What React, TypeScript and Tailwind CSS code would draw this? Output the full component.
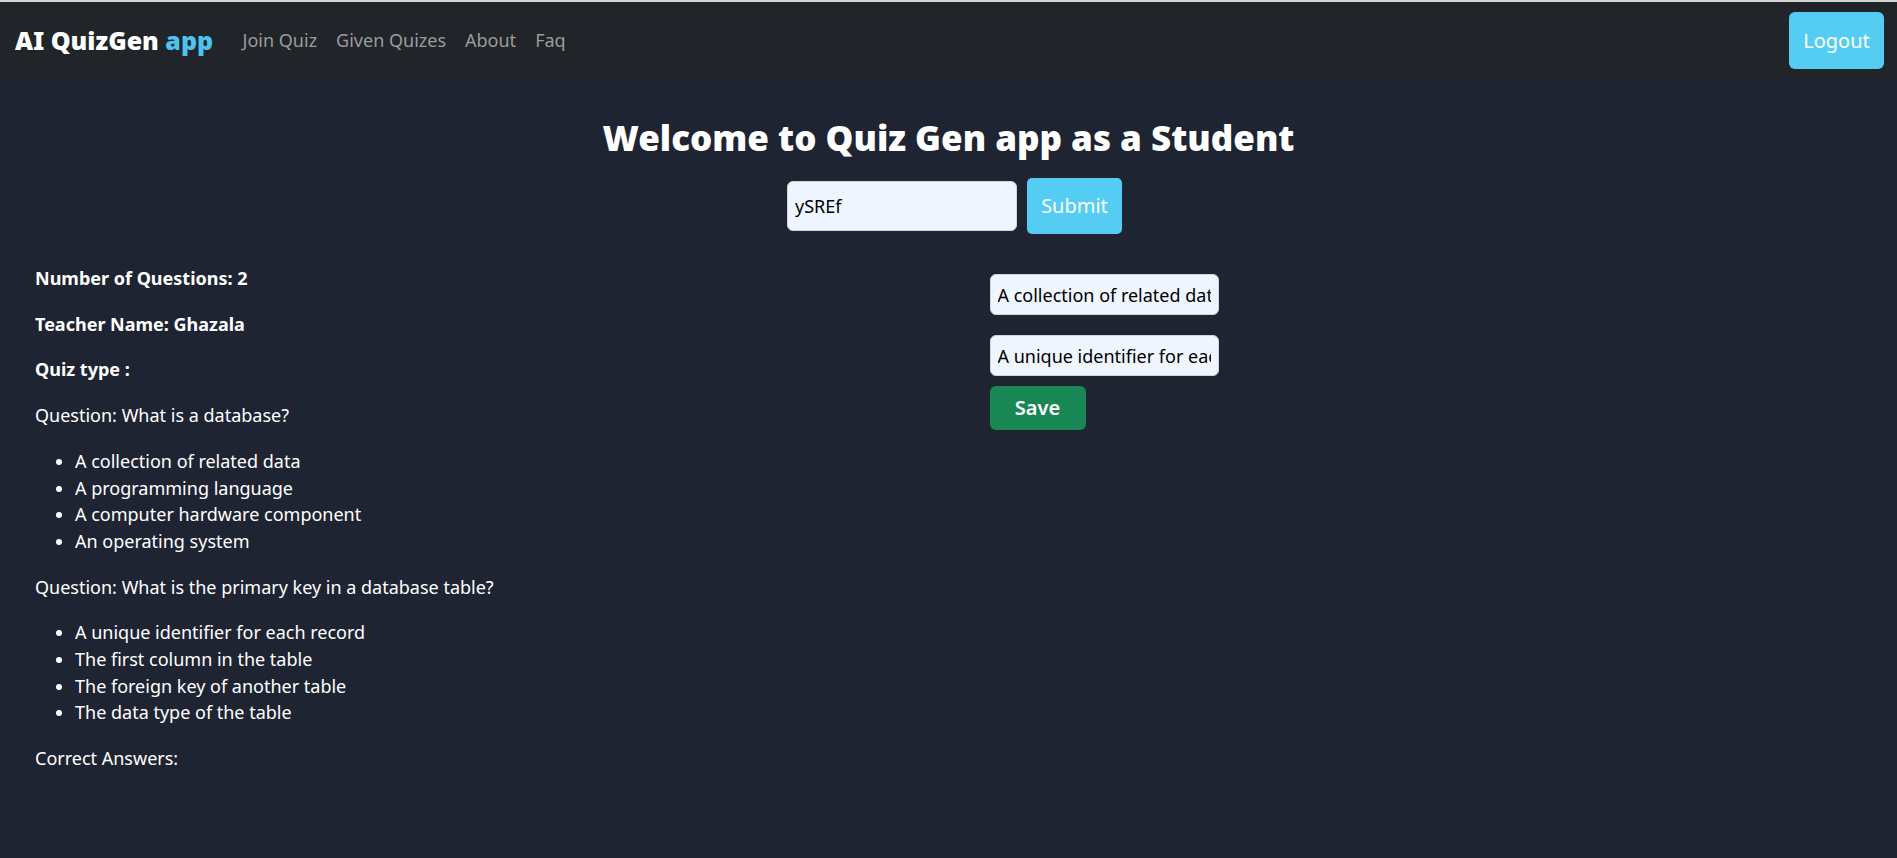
import React from 'react';

const navLinks = ['Join Quiz', 'Given Quizes', 'About', 'Faq'];

const questions = [
  {
    text: 'What is a database?',
    options: [
      'A collection of related data',
      'A programming language',
      'A computer hardware component',
      'An operating system',
    ],
  },
  {
    text: 'What is the primary key in a database table?',
    options: [
      'A unique identifier for each record',
      'The first column in the table',
      'The foreign key of another table',
      'The data type of the table',
    ],
  },
];

const Navbar = () => (
  <nav className="flex items-center justify-between h-[79px] border-t-2 border-[#d4d4d4] bg-[#212529] pl-[15px] pr-[13px]">
    <div className="flex items-center">
      <span className="text-[25px] font-black text-white leading-none">
        AI QuizGen <span className="text-[#4fc3f0]">app</span>
      </span>
      <ul className="flex items-center ml-[20px]">
        {navLinks.map((link) => (
          <li key={link} className="px-[9.5px] text-[18px] text-[#9a9b9e] leading-[27px]">
            {link}
          </li>
        ))}
      </ul>
    </div>
    <button className="w-[95px] h-[57px] rounded-[6px] bg-[#55ccf2] text-white text-[20px]">
      Logout
    </button>
  </nav>
);

const App = () => {
  return (
    <div className="min-h-screen bg-[#1f2433] font-['Noto_Sans',sans-serif]">
      <Navbar />

      <main>
        {/* titre + code du quiz */}
        <h1 className="mt-[37px] text-center text-[35px] leading-[44px] font-black text-white">
          Welcome to Quiz Gen app as a Student
        </h1>
        <div className="flex items-center justify-center gap-[10px] mt-[18px] pl-[12px]">
          <input
            defaultValue="ySREf"
            className="w-[230px] h-[50px] rounded-[6px] border border-[#d1d5db] bg-[#eff6ff] px-[7px] text-[18px] text-black outline-none"
          />
          <button className="w-[95px] h-[56px] rounded-[5px] bg-[#55ccf2] text-white text-[20px]">
            Submit
          </button>
        </div>

        <div className="grid grid-cols-2 mt-[31px]">
          {/* infos du quiz */}
          <div className="flex flex-col gap-[19px] pl-[35px] text-[18px] leading-[26.7px] text-white">
            <p className="font-bold">Number of Questions: 2</p>
            <p className="font-bold">Teacher Name: Ghazala</p>
            <p className="font-bold">Quiz type :</p>
            {questions.map((q) => (
              <React.Fragment key={q.text}>
                <p>Question: {q.text}</p>
                <ul className="list-disc pl-[40px]">
                  {q.options.map((opt) => (
                    <li key={opt}>{opt}</li>
                  ))}
                </ul>
              </React.Fragment>
            ))}
            <p>Correct Answers:</p>
          </div>

          {/* réponses */}
          <div className="flex flex-col items-start pl-[41px] pt-[9px]">
            <input
              defaultValue="A collection of related data"
              className="w-[229px] h-[41px] rounded-[6px] border border-[#d1d5db] bg-[#eff6ff] px-[7px] text-[18px] text-black outline-none"
            />
            <input
              defaultValue="A unique identifier for each record"
              className="w-[229px] h-[41px] mt-[20px] rounded-[6px] border border-[#d1d5db] bg-[#eff6ff] px-[7px] text-[18px] text-black outline-none"
            />
            <button className="w-[96px] h-[44px] mt-[10px] rounded-[6px] bg-[#198754] text-white text-[20px] font-semibold">
              Save
            </button>
          </div>
        </div>
      </main>
    </div>
  );
};

export default App;
